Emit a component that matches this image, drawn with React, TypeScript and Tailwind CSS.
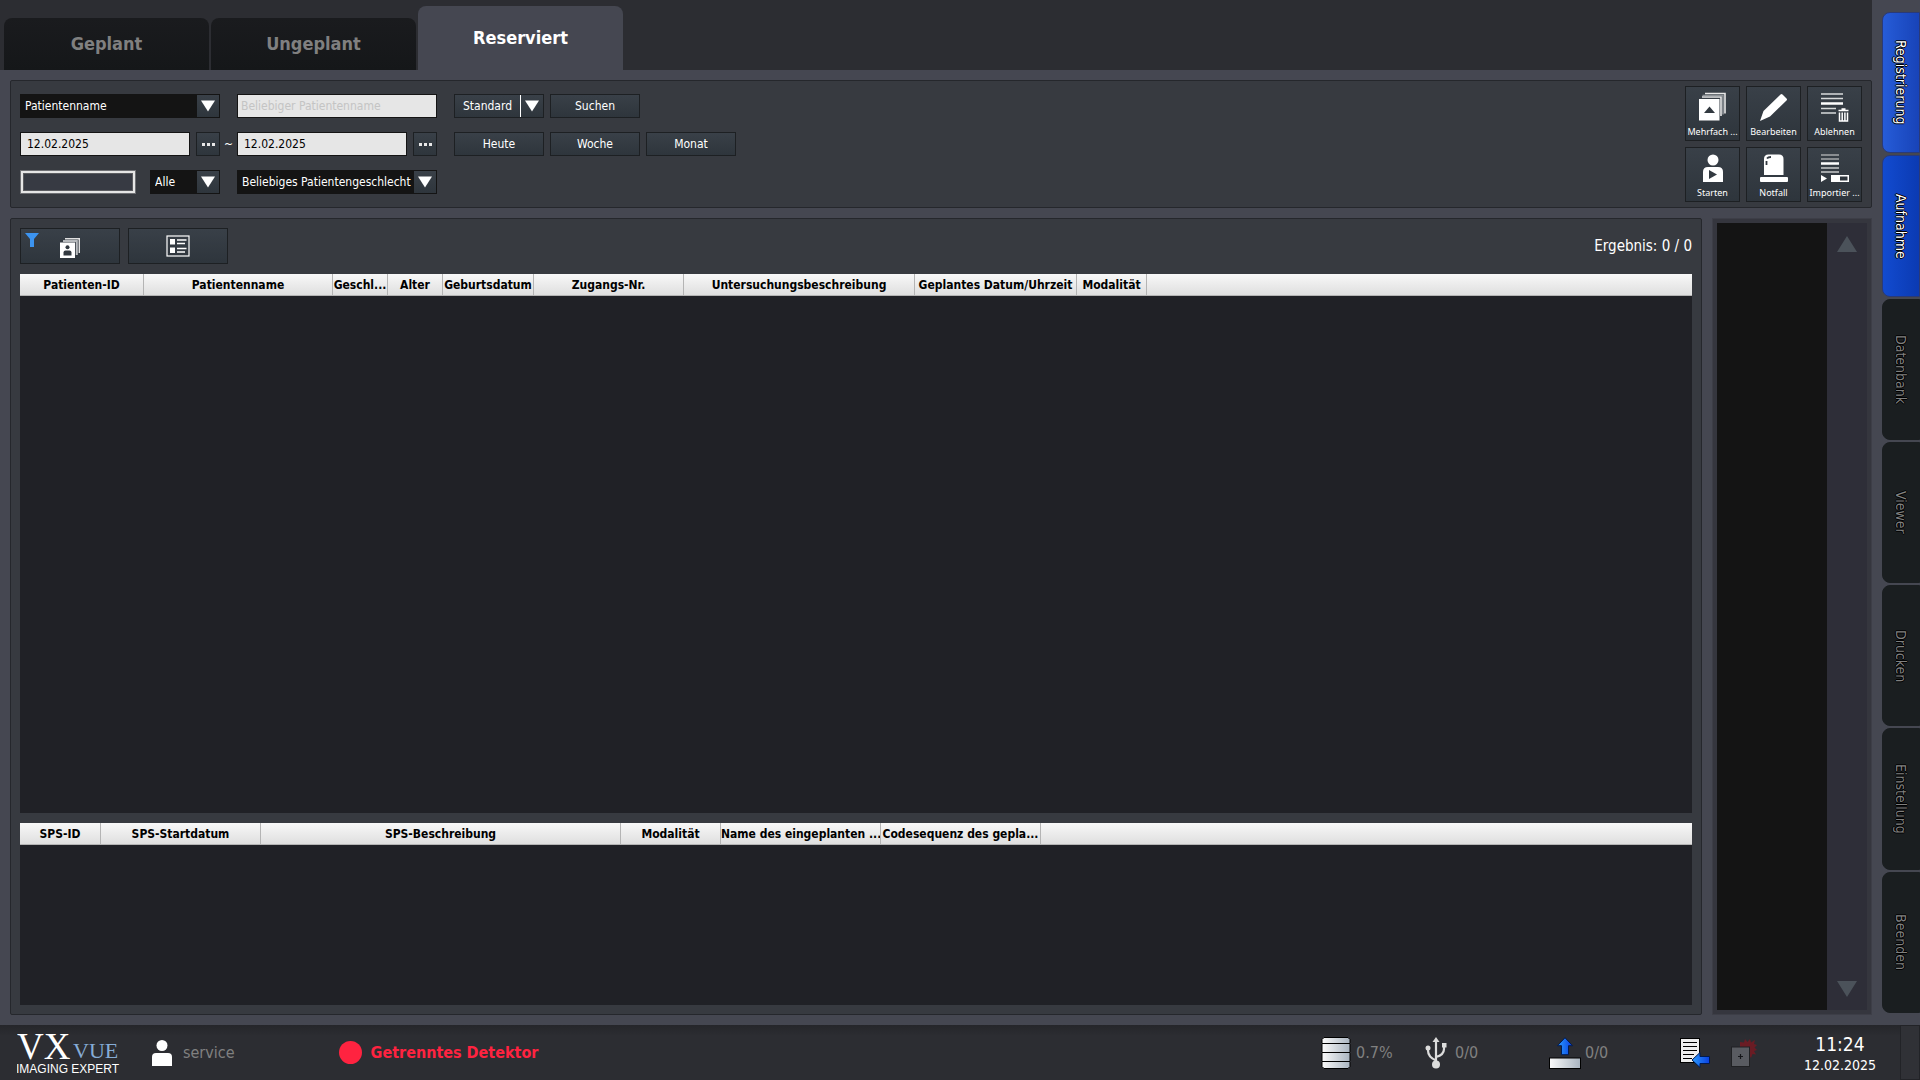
import type { ReactNode } from "react";

type Column = { label: string; width: string };

const patientColumns: Column[] = [
  { label: "Patienten-ID", width: "w-[124px]" },
  { label: "Patientenname", width: "w-[189px]" },
  { label: "Geschl...", width: "w-[55px]" },
  { label: "Alter", width: "w-[55px]" },
  { label: "Geburtsdatum", width: "w-[91px]" },
  { label: "Zugangs-Nr.", width: "w-[150px]" },
  { label: "Untersuchungsbeschreibung", width: "w-[231px]" },
  { label: "Geplantes Datum/Uhrzeit", width: "w-[162px]" },
  { label: "Modalität", width: "w-[70px]" },
];

const stepColumns: Column[] = [
  { label: "SPS-ID", width: "w-[81px]" },
  { label: "SPS-Startdatum", width: "w-[160px]" },
  { label: "SPS-Beschreibung", width: "w-[360px]" },
  { label: "Modalität", width: "w-[100px]" },
  { label: "Name des eingeplanten ...", width: "w-[160px]" },
  { label: "Codesequenz des gepla...", width: "w-[160px]" },
];

const sideTabs = ["Registrierung", "Aufnahme", "Datenbank", "Viewer", "Drucken", "Einstellung", "Beenden"];

const buttonLook = "border border-[#1d2023] bg-linear-to-b from-[#394048] to-[#2e353c] text-white";

function Triangle() {
  return (
    <svg viewBox="0 0 14 12" className="h-3 w-3.5" aria-hidden="true">
      <path d="M0 0.5h14L7 11.5z" fill="currentColor" />
    </svg>
  );
}

function Dropdown({ label, value, className }: { label: string; value: string; className: string }) {
  return (
    <div className={`relative h-6 ${className}`}>
      <select
        aria-label={label}
        className="block h-6 w-full appearance-none overflow-hidden border border-[#141414] bg-[#141414] pr-6 pb-px pl-1 text-xs text-white"
      >
        <option>{value}</option>
      </select>
      <span className="pointer-events-none absolute inset-y-0 right-0 flex w-6 items-center justify-center border border-[#141414] bg-linear-to-b from-[#394048] to-[#2e353c] text-white">
        <Triangle />
      </span>
    </div>
  );
}

function DateField({ label }: { label: string }) {
  return (
    <div className="flex gap-1.5">
      <input
        aria-label={label}
        defaultValue="12.02.2025"
        className="block h-6 w-[170px] border border-[#141414] bg-[#e6e6e6] px-1.5 text-xs text-black"
      />
      <button aria-label={`${label} auswählen`} className={`flex h-6 w-6 items-center justify-center gap-0.5 ${buttonLook}`}>
        <i className="size-[3px] bg-[#e8e8e8]" />
        <i className="size-[3px] bg-[#e8e8e8]" />
        <i className="size-[3px] bg-[#e8e8e8]" />
      </button>
    </div>
  );
}

function SmallButton({ children }: { children: ReactNode }) {
  return <button className={`block h-6 w-[90px] pb-px text-xs ${buttonLook}`}>{children}</button>;
}

function ActionButton({ label, children }: { label: string; children: ReactNode }) {
  return (
    <button className={`flex size-[55px] flex-col items-center justify-between pt-[5px] pb-0.5 ${buttonLook}`}>
      <svg viewBox="0 0 32 32" className="size-8" fill="none" aria-hidden="true">
        {children}
      </svg>
      <span className="font-['Noto_Sans',sans-serif] text-[9px] leading-3 whitespace-nowrap">{label}</span>
    </button>
  );
}

function ListTable({ columns, label }: { columns: Column[]; label: string }) {
  return (
    <table aria-label={label} className="w-full table-fixed border-separate border-spacing-0">
      <thead>
        <tr className="bg-linear-to-b from-[#f8f8f8] to-[#dedede]">
          {columns.map((c) => (
            <th
              key={c.label}
              scope="col"
              className={`overflow-hidden border-r border-b border-[#b4b4b4] p-0 pt-px text-center text-xs leading-5 font-bold whitespace-nowrap text-black ${c.width}`}
            >
              {c.label}
            </th>
          ))}
          <td className="border-b border-[#b4b4b4] p-0" />
        </tr>
      </thead>
    </table>
  );
}

function Logo() {
  return (
    <svg viewBox="0 0 104 55" className="h-[55px] w-[104px]" role="img" aria-label="VXvue Imaging Expert">
      <text x="0" y="34" fontFamily="Liberation Serif, serif" fontSize="37" fill="#fff">
        VX
      </text>
      <text x="56" y="33" fontFamily="Liberation Serif, serif" fontSize="22" fill="#86acd6">
        VUE
      </text>
      <text x="-1" y="48" fontFamily="Liberation Sans, sans-serif" fontSize="12" fill="#fff">
        IMAGING EXPERT
      </text>
    </svg>
  );
}

export default function App() {
  return (
    <div className="flex min-h-screen flex-col bg-[#454751] font-['DejaVu_Sans_Condensed','Noto_Sans',sans-serif]">
      <div className="flex grow">
        <main className="flex min-w-0 grow flex-col">
          <nav className="flex h-[70px] items-end gap-0.5 bg-[#2c2d32] pl-1 text-lg font-bold">
            <button className="h-[52px] w-[205px] rounded-t-lg bg-linear-to-b from-[#1a1b1e] to-[#151719] text-[#808080]">Geplant</button>
            <button className="h-[52px] w-[205px] rounded-t-lg bg-linear-to-b from-[#1a1b1e] to-[#151719] text-[#808080]">Ungeplant</button>
            <button className="h-16 w-[205px] rounded-t-lg bg-[#454751] text-white">Reserviert</button>
          </nav>

          <div className="flex grow flex-col gap-2.5 pt-2.5 pb-2.5 pl-2.5">
            <section className="flex justify-between rounded-xs border border-[#25272c] bg-[#373a40] py-[5px] pr-[9px] pl-[9px]">
              <div className="flex flex-col gap-3.5 pt-2">
                <div className="flex">
                  <Dropdown label="Suchfeld" value="Patientenname" className="w-[200px]" />
                  <input
                    aria-label="Patientenname"
                    placeholder="Beliebiger Patientenname"
                    className="ml-[17px] block h-6 w-[200px] border border-[#141414] bg-[#e6e6e6] px-[3px] text-xs placeholder:text-[#c4c4c4]"
                  />
                  <div className={`ml-[17px] flex h-6 w-[90px] ${buttonLook}`}>
                    <button className="w-[66px] border-r border-white pb-px text-xs">Standard</button>
                    <button aria-label="Standard auswählen" className="flex grow items-center justify-center">
                      <Triangle />
                    </button>
                  </div>
                  <div className="ml-1.5">
                    <SmallButton>Suchen</SmallButton>
                  </div>
                </div>
                <div className="flex">
                  <DateField label="Startdatum" />
                  <span className="w-[17px] text-center text-xs leading-6 text-white">~</span>
                  <DateField label="Enddatum" />
                  <div className="ml-[17px] flex gap-1.5">
                    <SmallButton>Heute</SmallButton>
                    <SmallButton>Woche</SmallButton>
                    <SmallButton>Monat</SmallButton>
                  </div>
                </div>
                <div className="flex">
                  <div className="h-6 w-[116px] border border-[#6f7074] bg-[#e6e6e6] p-0.5">
                    <input aria-label="Alter" className="block h-[18px] w-full border border-[#5c5d61] bg-[#373a43] px-1 text-xs text-white" />
                  </div>
                  <Dropdown label="Altersgruppe" value="Alle" className="ml-3.5 w-[70px]" />
                  <Dropdown label="Geschlecht" value="Beliebiges Patientengeschlecht" className="ml-[17px] w-[200px]" />
                </div>
              </div>

              <div className="grid grid-cols-3 gap-1.5">
                <ActionButton label="Mehrfach ...">
                  <path d="M8 1.5h20v20M5 5h19v19" stroke="#e8e8e8" strokeWidth="1.6" />
                  <path d="M5.5 3.5h20.500v19" stroke="#8d9297" strokeWidth="1.6" />
                  <path d="M2 7h20.500v21.500H2z" fill="#fff" />
                  <path d="M12.500 14.500l5.500 6.500H7z" fill="#323940" />
                </ActionButton>
                <ActionButton label="Bearbeiten">
                  <path d="M22.500 2.500q1-1 2 0l4 4q1 1 0 2L12 24.500 2 29l3.500-10z" fill="#fff" />
                </ActionButton>
                <ActionButton label="Ablehnen">
                  <path d="M2 2h22M2 6.500h22" stroke="#d8dadb" strokeWidth="1.500" />
                  <path d="M2 11.500h22" stroke="#fff" strokeWidth="2.500" />
                  <path d="M2 16.500h15M2 21h15" stroke="#d8dadb" strokeWidth="1.500" />
                  <path d="M19.500 18.500h10M22.500 17h4M20.500 20.500v8.500h8v-8.500M23.200 20.500v8M25.900 20.500v8" stroke="#fff" strokeWidth="1.500" />
                </ActionButton>
                <ActionButton label="Starten">
                  <circle cx="16" cy="7" r="5.500" fill="#fff" />
                  <path d="M6 29V19q0-5 5-5h10q5 0 5 5v10z" fill="#fff" />
                  <path d="M12 17l8 4.500-8 4.500z" fill="#323940" />
                </ActionButton>
                <ActionButton label="Notfall">
                  <path d="M6 22V6q0-4.500 4.500-4.500h10.500q4.500 0 4.500 4.500v16z" fill="#fff" />
                  <path d="M8.500 12V8M9 5.500Q10 4 13 4" stroke="#323940" strokeWidth="1.800" />
                  <rect x="2" y="24" width="28" height="5" rx="1" fill="#fff" />
                </ActionButton>
                <ActionButton label="Importier ...">
                  <path d="M2 2h18M2 6h18" stroke="#a5a8ab" strokeWidth="1.600" />
                  <path d="M2 10.500h18" stroke="#fff" strokeWidth="2.500" />
                  <path d="M2 15h18M2 19h18" stroke="#c8cacc" strokeWidth="1.400" />
                  <path d="M2 22l6 3.500-6 3.500z" fill="#fff" />
                  <rect x="12" y="22" width="18" height="7" fill="#fff" />
                  <rect x="21" y="23.500" width="7.500" height="4" fill="#2e353c" />
                </ActionButton>
              </div>
            </section>

            <div className="flex grow gap-2.5">
              <section className="flex min-w-0 grow flex-col rounded-xs border border-[#25272c] bg-[#373a40] p-[9px]">
                <div className="mb-2.5 flex gap-2">
                  <button aria-label="Patientenliste filtern" className={`relative flex h-9 w-[100px] items-center justify-center ${buttonLook}`}>
                    <svg viewBox="0 0 14 14" className="absolute top-1 left-1 size-3.5" aria-hidden="true">
                      <path d="M0 0h14L9 6v8H5V6z" fill="#3c94f0" />
                    </svg>
                    <svg viewBox="0 0 20 20" className="mt-1 size-5" fill="none" aria-hidden="true">
                      <path d="M5 0.700h14.300V15" stroke="#e0e0e0" strokeWidth="1.400" />
                      <path d="M3 3h13.800v14" stroke="#b8bbbe" strokeWidth="2" />
                      <path d="M0 4.500h15V20H0z" fill="#fff" />
                      <circle cx="7.500" cy="9.200" r="2" fill="#323940" />
                      <path d="M3.500 17.500v-3q0-2 2-2h4q2 0 2 2v3z" fill="#323940" />
                    </svg>
                  </button>
                  <button aria-label="Listenansicht" className={`flex h-9 w-[100px] items-center justify-center ${buttonLook}`}>
                    <svg viewBox="0 0 24 22" className="h-[22px] w-6" fill="none" aria-hidden="true">
                      <rect x="1" y="1" width="22" height="20" stroke="#fff" strokeWidth="1.200" />
                      <path d="M4 4h5v5.500H4zM4 12.500h5V18H4z" fill="#fff" />
                      <path d="M11 5h9.500M11 8.500h8M11 13.500h9.500M11 17h8" stroke="#fff" strokeWidth="1.500" />
                    </svg>
                  </button>
                  <p className="ml-auto self-center text-[15px] leading-5 text-white">Ergebnis: 0 / 0</p>
                </div>
                <div className="grow bg-[#202126]">
                  <ListTable columns={patientColumns} label="Patienten" />
                </div>
                <div className="mt-2.5 h-[182px] bg-[#202126]">
                  <ListTable columns={stepColumns} label="Geplante Schritte" />
                </div>
              </section>

              <aside className="flex w-40 shrink-0 border border-[#3d3e47] bg-[#35363e] p-1">
                <div className="grow bg-[#141414]" />
                <div className="flex w-10 flex-col items-center justify-between bg-[#2e2e38] py-[13px] text-[#4b525a]">
                  <button aria-label="Nach oben">
                    <svg viewBox="0 0 20 16" className="h-4 w-5" aria-hidden="true">
                      <path d="M10 0l10 16H0z" fill="currentColor" />
                    </svg>
                  </button>
                  <button aria-label="Nach unten">
                    <svg viewBox="0 0 20 16" className="h-4 w-5" aria-hidden="true">
                      <path d="M0 0h20L10 16z" fill="currentColor" />
                    </svg>
                  </button>
                </div>
              </aside>
            </div>
          </div>
        </main>

        <nav className="ml-2.5 flex w-[38px] shrink-0 flex-col gap-0.5 pt-3 pb-3">
          {sideTabs.map((tab, i) => (
            <button
              key={tab}
              className={`flex grow basis-0 items-center justify-center rounded-l-lg border text-sm text-shadow-[1px_0_0_#000,-1px_0_0_#000,0_1px_0_#000,0_-1px_0_#000] ${
                i === 0
                  ? "border-[#2a3a78] bg-linear-to-r from-[#265cd8] to-[#1843b8] text-white"
                  : i === 1
                    ? "border-[#2a3a78] bg-linear-to-r from-[#124bd0] to-[#0b3ab2] text-white"
                    : "border-[#1a1e20] bg-[#1a1e20] text-[#808080]"
              }`}
            >
              <span className="[writing-mode:vertical-rl]">{tab}</span>
            </button>
          ))}
        </nav>
      </div>

      <footer className="flex h-[55px] items-center bg-linear-to-b from-[#25262a] via-[#2c2d32] via-20% to-[#2c2d32] pl-[17px] text-base text-[#808080]">
        <Logo />
        <svg viewBox="0 0 20 26" className="ml-[31px] h-[26px] w-5" fill="#fff" aria-hidden="true">
          <circle cx="10" cy="5.500" r="5.500" />
          <path d="M0 26V17q0-4 4-4h12q4 0 4 4v9z" />
        </svg>
        <span className="ml-[11px]">service</span>
        <span className="ml-[104px] size-[23px] rounded-full bg-[#ff2340]" />
        <strong className="ml-[9px] text-[#ff2340]">Getrenntes Detektor</strong>

        <div className="ml-auto flex h-full items-center">
          <svg viewBox="0 0 30 32" className="h-8 w-[30px]" aria-hidden="true">
            <defs>
              <linearGradient id="silver" x1="0" x2="1">
                <stop offset="0" stopColor="#fafafa" />
                <stop offset="1" stopColor="#a9b4c0" />
              </linearGradient>
              <linearGradient id="azure" x1="0" x2="1">
                <stop offset="0" stopColor="#2a9bff" />
                <stop offset="1" stopColor="#0b3fe0" />
              </linearGradient>
            </defs>
            <path d="M3 .5h24l2 2v3l-1 1 1 1v7l-1 1 1 1v7l-1 1 1 1v4l-2 2H3l-2-2v-4l1-1-1-1v-7l1-1-1-1v-7l1-1-1-1v-3z" fill="url(#silver)" stroke="#000" />
            <path d="M1 6.500h28M1 15.500h28M1 24.500h28" stroke="#000" />
          </svg>
          <span className="ml-[5px] w-10">0.7%</span>
          <svg viewBox="0 0 22 32" className="ml-[29px] h-8 w-[22px]" fill="none" stroke="#dcdcdc" strokeWidth="2.200" aria-hidden="true">
            <path d="M11 4v24M11 23.500Q3 20 3 13.500V12M11 20q8-2 8-8V8" />
            <path d="M11 0l3.500 5h-7z" fill="#dcdcdc" stroke="none" />
            <circle cx="3" cy="11" r="2.500" fill="#dcdcdc" stroke="none" />
            <path d="M17 6h4.500v4.500H17z" fill="#dcdcdc" stroke="none" />
            <circle cx="11" cy="27.500" r="4" fill="#dcdcdc" stroke="none" />
          </svg>
          <span className="ml-2 w-7">0/0</span>
          <svg viewBox="0 0 32 32" className="ml-[66px] size-8" aria-hidden="true">
            <path d="M16 .7l7.500 8h-4v9h-7v-9h-4z" fill="url(#azure)" stroke="#001a50" />
            <rect x=".5" y="21" width="31" height="10.500" fill="url(#silver)" stroke="#000" />
          </svg>
          <span className="ml-1 w-7">0/0</span>
          <svg viewBox="0 0 30 30" className="ml-[67px] size-[30px]" aria-hidden="true">
            <rect x=".5" y=".5" width="19" height="24" fill="#eee" stroke="#000" />
            <path d="M3 4.500h14M3 8.500h14M3 12.500h14M3 16.500h11M3 20.500h9" stroke="#000" />
            <path d="M12 22l8-7.500v4h9.500v7H20v4z" fill="url(#azure)" stroke="#001a50" />
          </svg>
          <svg viewBox="0 0 26 28" className="ml-[21px] h-7 w-[26px]" aria-hidden="true">
            <path d="M9 3l4 .5L14 0l2.500 3L19 0l1 3.500L24 1l-1 4 3 1-2.500 2.500L26 11l-3 1 2 3.500-3.500-.5L20 19l-2-3V8H9z" fill="#6a1c24" />
            <rect x=".5" y="8" width="18" height="19.500" fill="#595b61" stroke="#202124" />
            <path d="M9.500 15v5M7 17.500h5" stroke="#15161a" strokeWidth="1.200" />
          </svg>
          <div className="ml-[33px] flex w-[100px] flex-col items-center text-white">
            <time className="text-[19px] leading-6">11:24</time>
            <time className="text-sm leading-[18px]">12.02.2025</time>
          </div>
          <div className="ml-2.5 h-full w-5 border border-[#222327] bg-[#303136]" />
        </div>
      </footer>
    </div>
  );
}
